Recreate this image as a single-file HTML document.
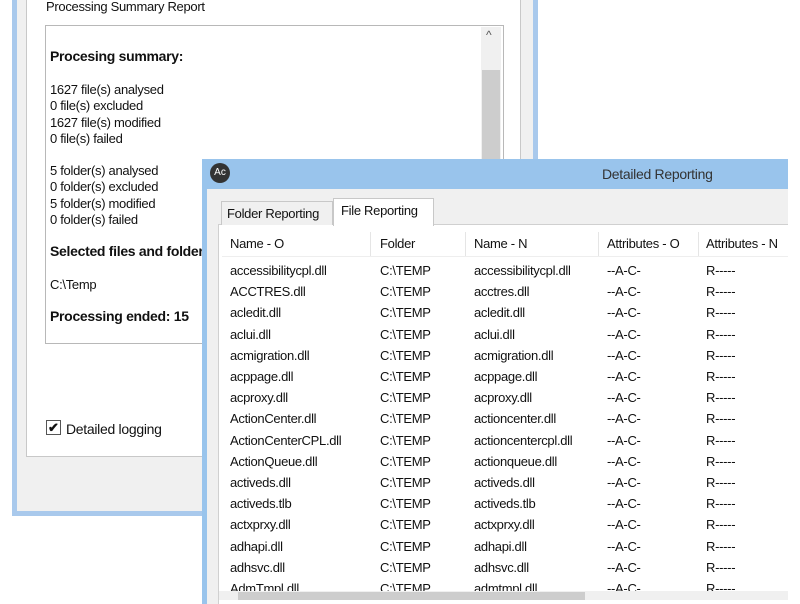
<!DOCTYPE html>
<html><head><style>
body{margin:0;width:800px;height:600px;overflow:hidden;background:#fff;font-family:"Liberation Sans",sans-serif;font-size:13px;color:#111;position:relative}
div{box-sizing:border-box}
.a{position:absolute}
.t{position:absolute;white-space:nowrap;letter-spacing:-0.3px}
</style></head><body>
<!-- back window -->
<div class="a" style="left:12px;top:-5px;width:526px;height:521px;background:#a9c9ec"></div>
<div class="a" style="left:17px;top:-5px;width:516px;height:516px;background:#f0f0f0"></div>
<div class="a" style="left:26px;top:-5px;width:495px;height:462px;background:#fff;border:1px solid #c8c8c8"></div>
<div class="t" style="left:46px;top:-1px">Processing Summary Report</div>
<div class="a" style="left:45px;top:25px;width:459px;height:319px;border:1px solid #b8b8b8;background:#fff"></div>
<div class="a" style="left:481px;top:27px;width:20px;height:316px;background:#f0f0f0"></div>
<div class="a" style="left:482px;top:70px;width:18px;height:270px;background:#cdcdcd"></div>
<div class="t" style="left:486px;top:28px;font-size:12px;color:#555">&#94;</div>
<div class="t" style="left:50px;top:48px;font-weight:bold;font-size:14px">Procesing summary:</div>
<div class="t" style="left:50px;top:82px;line-height:16.3px">1627 file(s) analysed<br>0 file(s) excluded<br>1627 file(s) modified<br>0 file(s) failed</div>
<div class="t" style="left:50px;top:163px;line-height:16.3px">5 folder(s) analysed<br>0 folder(s) excluded<br>5 folder(s) modified<br>0 folder(s) failed</div>
<div class="t" style="left:50px;top:243px;font-weight:bold;font-size:14px">Selected files and folders</div>
<div class="t" style="left:50px;top:277px">C:\Temp</div>
<div class="t" style="left:50px;top:308px;font-weight:bold;font-size:14px">Processing ended: 15</div>
<div class="a" style="left:46px;top:420px;width:15px;height:15px;border:1px solid #555;background:#fff;font-size:13px;line-height:13px;text-align:center;font-weight:bold">&#10004;</div>
<div class="t" style="left:66px;top:421px;font-size:14px">Detailed logging</div>

<!-- front window -->
<div class="a" style="left:202px;top:159px;width:586px;height:445px;background:#99c4ec"></div>
<div class="a" style="left:207px;top:189px;width:581px;height:415px;background:#f0f0f0"></div>
<div class="a" style="left:210px;top:163px;width:20px;height:20px;border-radius:50%;background:#333;color:#fff;font-size:10px;line-height:20px;text-align:center">Ac</div>
<div class="t" style="left:602px;top:166px;font-size:14px;color:#333">Detailed Reporting</div>
<div class="a" style="left:218px;top:224px;width:570px;height:380px;background:#fff;border-top:1px solid #d0d0d0;border-left:1px solid #d0d0d0"></div>
<div class="a" style="left:221px;top:201px;width:112px;height:24px;background:#f0f0f0;border:1px solid #c8c8c8;border-bottom:none"></div>
<div class="t" style="left:227px;top:206px">Folder Reporting</div>
<div class="a" style="left:333px;top:198px;width:101px;height:28px;background:#fff;border:1px solid #c8c8c8;border-bottom:none"></div>
<div class="t" style="left:341px;top:203px">File Reporting</div>
<div class="a" style="left:222px;top:256px;width:566px;height:1px;background:#eee"></div>
<div class="a" style="left:370px;top:232px;width:1px;height:24px;background:#e5e5e5"></div>
<div class="a" style="left:465px;top:232px;width:1px;height:24px;background:#e5e5e5"></div>
<div class="a" style="left:598px;top:232px;width:1px;height:24px;background:#e5e5e5"></div>
<div class="a" style="left:698px;top:232px;width:1px;height:24px;background:#e5e5e5"></div>
<div class="t" style="left:230px;top:236px">Name - O</div>
<div class="t" style="left:380px;top:236px">Folder</div>
<div class="t" style="left:474px;top:236px">Name - N</div>
<div class="t" style="left:607px;top:236px">Attributes - O</div>
<div class="t" style="left:706px;top:236px">Attributes - N</div>
<div class="t" style="left:230px;top:260px;line-height:21.2px">accessibilitycpl.dll<br>ACCTRES.dll<br>acledit.dll<br>aclui.dll<br>acmigration.dll<br>acppage.dll<br>acproxy.dll<br>ActionCenter.dll<br>ActionCenterCPL.dll<br>ActionQueue.dll<br>activeds.dll<br>activeds.tlb<br>actxprxy.dll<br>adhapi.dll<br>adhsvc.dll<br>AdmTmpl.dll</div>
<div class="t" style="left:380px;top:260px;line-height:21.2px">C:\TEMP<br>C:\TEMP<br>C:\TEMP<br>C:\TEMP<br>C:\TEMP<br>C:\TEMP<br>C:\TEMP<br>C:\TEMP<br>C:\TEMP<br>C:\TEMP<br>C:\TEMP<br>C:\TEMP<br>C:\TEMP<br>C:\TEMP<br>C:\TEMP<br>C:\TEMP</div>
<div class="t" style="left:474px;top:260px;line-height:21.2px">accessibilitycpl.dll<br>acctres.dll<br>acledit.dll<br>aclui.dll<br>acmigration.dll<br>acppage.dll<br>acproxy.dll<br>actioncenter.dll<br>actioncentercpl.dll<br>actionqueue.dll<br>activeds.dll<br>activeds.tlb<br>actxprxy.dll<br>adhapi.dll<br>adhsvc.dll<br>admtmpl.dll</div>
<div class="t" style="left:607px;top:260px;line-height:21.2px">--A-C-<br>--A-C-<br>--A-C-<br>--A-C-<br>--A-C-<br>--A-C-<br>--A-C-<br>--A-C-<br>--A-C-<br>--A-C-<br>--A-C-<br>--A-C-<br>--A-C-<br>--A-C-<br>--A-C-<br>--A-C-</div>
<div class="t" style="left:706px;top:260px;line-height:21.2px">R-----<br>R-----<br>R-----<br>R-----<br>R-----<br>R-----<br>R-----<br>R-----<br>R-----<br>R-----<br>R-----<br>R-----<br>R-----<br>R-----<br>R-----<br>R-----</div>
<div class="a" style="left:219px;top:591px;width:569px;height:9px;background:#f0f0f0"></div>
<div class="a" style="left:238px;top:592px;width:347px;height:8px;background:#cdcdcd"></div>
</body></html>
